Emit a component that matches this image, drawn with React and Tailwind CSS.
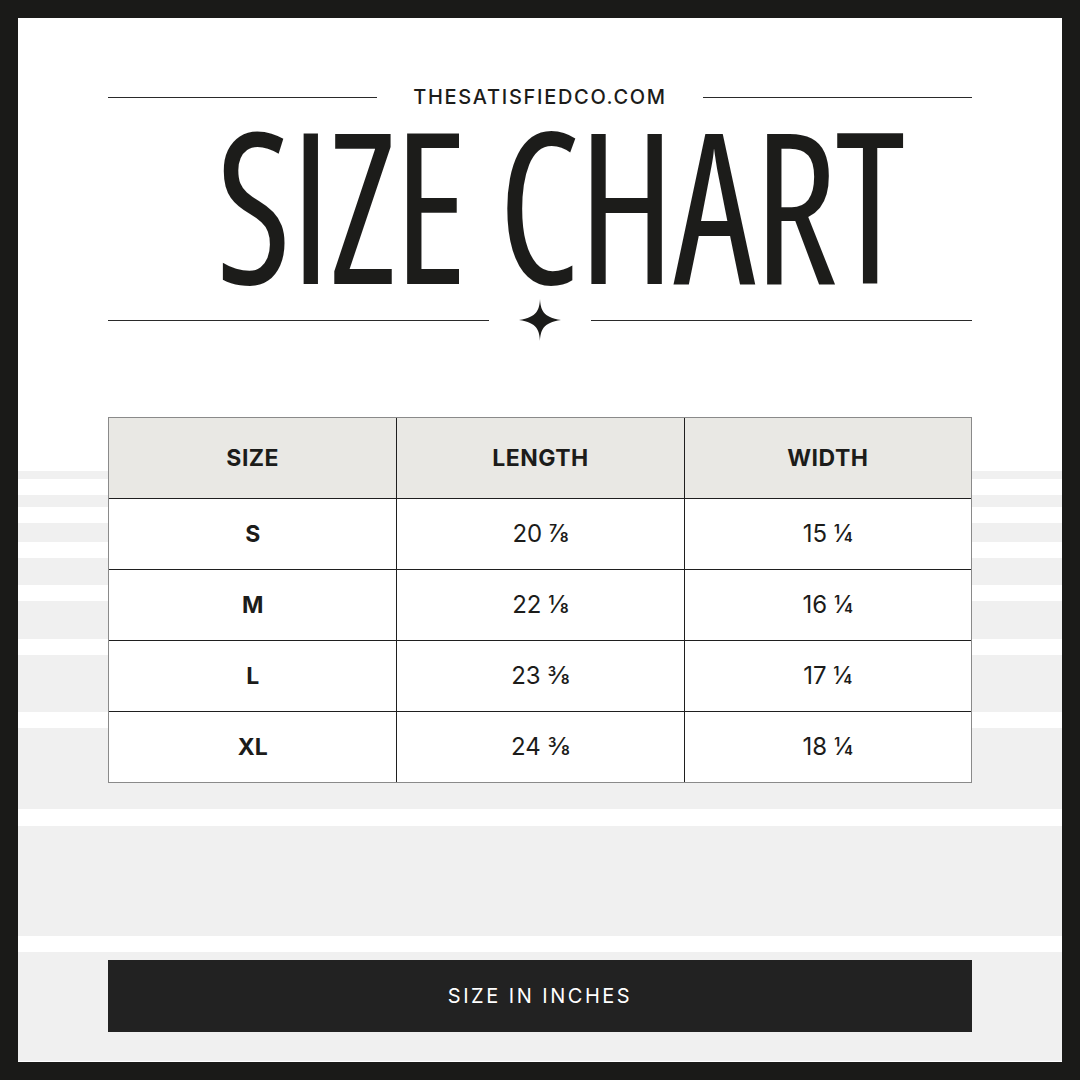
const stripes = [
  ["w", 453],
  ["g", 8],
  ["w", 16],
  ["g", 12],
  ["w", 16],
  ["g", 19],
  ["w", 16],
  ["g", 27],
  ["w", 16],
  ["g", 38],
  ["w", 16],
  ["g", 57],
  ["w", 16],
  ["g", 81],
  ["w", 17],
  ["g", 110],
  ["w", 16],
  ["g", 109],
];

const rows = [
  ["S", "20 ⅞", "15 ¼"],
  ["M", "22 ⅛", "16 ¼"],
  ["L", "23 ⅜", "17 ¼"],
  ["XL", "24 ⅜", "18 ¼"],
];

function Star() {
  return (
    <svg width="42" height="42" viewBox="0 0 40 40" className="shrink-0">
      <path
        d="M20 0 C20.6 10 22.5 17.5 40 20 C22.5 22.5 20.6 30 20 40 C19.4 30 17.5 22.5 0 20 C17.5 17.5 19.4 10 20 0 Z"
        fill="#1c1c1a"
      />
    </svg>
  );
}

export default function App() {
  return (
    <div className="w-[1080px] h-[1080px] bg-[#1a1a18] p-[18px] font-['Inter',sans-serif]">
      <div className="relative w-full h-full bg-white overflow-hidden">
        <div className="absolute inset-0 flex flex-col">
          {stripes.map(([c, h], i) => (
            <div
              key={i}
              className={c === "g" ? "bg-[#f0f0f0] shrink-0" : "bg-white shrink-0"}
              style={{ height: h }}
            />
          ))}
        </div>

        <div className="relative flex flex-col px-[90px] pt-[64px]">
          <div className="flex items-center h-[30px]">
            <div className="flex-1 h-px bg-[#2a2a2a]" />
            <div className="px-[36px] text-[20px] font-medium tracking-[0.085em] text-[#1c1c1a] leading-none">
              THESATISFIEDCO.COM
            </div>
            <div className="flex-1 h-px bg-[#2a2a2a]" />
          </div>

          <div className="mt-[-14px] h-[210px] flex justify-center">
            <div className="ml-[39px] font-['Open_Sans',sans-serif] font-stretch-[75%] font-medium text-[210px] leading-none text-[#1c1c1a] scale-x-[0.88] tracking-[-0.01em] whitespace-nowrap">
              SIZE CHART
            </div>
          </div>

          <div className="mt-[-9px] flex items-center h-[42px]">
            <div className="flex-1 h-px bg-[#2a2a2a]" />
            <div className="px-[30px] flex items-center">
              <Star />
            </div>
            <div className="flex-1 h-px bg-[#2a2a2a]" />
          </div>

          <div className="mt-[76px] border border-[#8a8a8a] bg-white">
            <div className="grid grid-cols-3 h-[81px] bg-[#e9e8e4] border-b border-[#1f1f1f]">
              <div className="flex items-center justify-center text-[23px] font-bold tracking-[0.02em] text-[#1c1c1a]">SIZE</div>
              <div className="flex items-center justify-center text-[23px] font-bold tracking-[0.02em] text-[#1c1c1a] border-l border-[#1f1f1f]">LENGTH</div>
              <div className="flex items-center justify-center text-[23px] font-bold tracking-[0.02em] text-[#1c1c1a] border-l border-[#1f1f1f]">WIDTH</div>
            </div>
            {rows.map((r, i) => (
              <div
                key={i}
                className={
                  i < rows.length - 1
                    ? "grid grid-cols-3 h-[71px] border-b border-[#1f1f1f]"
                    : "grid grid-cols-3 h-[70px]"
                }
              >
                <div className="flex items-center justify-center text-[23px] font-bold text-[#1c1c1a]">{r[0]}</div>
                <div className="flex items-center justify-center text-[24px] text-[#1c1c1a] border-l border-[#1f1f1f]">{r[1]}</div>
                <div className="flex items-center justify-center text-[24px] text-[#1c1c1a] border-l border-[#1f1f1f]">{r[2]}</div>
              </div>
            ))}
          </div>

          <div className="mt-[177px] h-[72px] bg-[#222222] flex items-center justify-center text-white text-[20px] tracking-[0.125em]">
            SIZE IN INCHES
          </div>
        </div>
      </div>
    </div>
  );
}
